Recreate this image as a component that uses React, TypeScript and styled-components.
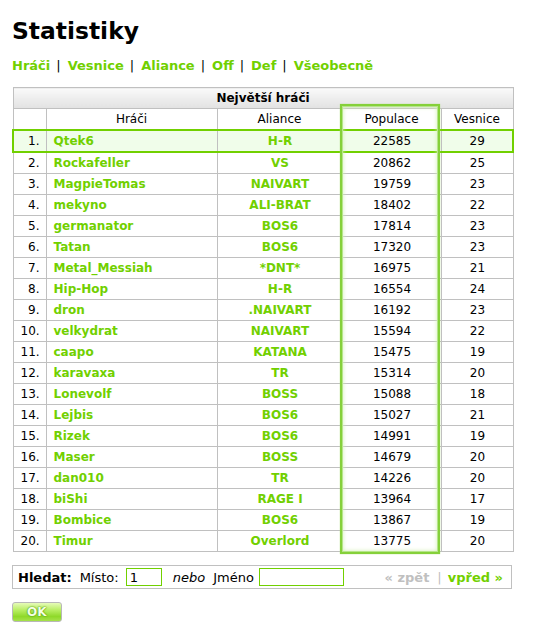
import React from "react";
import styled, { createGlobalStyle } from "styled-components";

const Global = createGlobalStyle`
  html, body { margin: 0; padding: 0; background: #fff; }
  body { font-family: "DejaVu Sans", Verdana, sans-serif; font-size: 12px; color: #000; }
`;

const Page = styled.div`
  padding: 14px 0 0 12px;
  width: 500px;
`;

const Title = styled.h1`
  margin: 0;
  font-size: 23.4px;
  font-weight: bold;
  line-height: 34px;
`;

const Menu = styled.div`
  margin-top: 9px;
  font-size: 13px;
  line-height: 18px;
  font-weight: bold;
  color: #000;
`;

const MenuLink = styled.a`
  color: #71d000;
  text-decoration: none;
  font-weight: bold;
`;

const Sep = styled.span`
  font-weight: normal;
  padding: 0 7px 0 6px;
`;

const TableWrap = styled.div`
  position: relative;
  margin-top: 12px;
`;

const Table = styled.table`
  width: 500px;
  border-collapse: collapse;
  table-layout: fixed;
`;

const CaptionCell = styled.th`
  height: 20px;
  padding: 0;
  border: 1px solid #c0c0c0;
  background: linear-gradient(#fafafa, #ececec 55%, #e2e2e2);
  font-weight: bold;
  text-align: center;
  line-height: 20px;
`;

const HeadCell = styled.td`
  height: 20px;
  padding: 0;
  border: 1px solid #c0c0c0;
  text-align: center;
  line-height: 20px;
`;

const Row = styled.tr<{ $own?: boolean }>`
  background: ${(p) => (p.$own ? "#f0fdea" : "#fff")};
  & > td {
    ${(p) => (p.$own ? "border-top: 2px solid #71d000; border-bottom: 2px solid #71d000;" : "")}
  }
  & > td:first-child {
    ${(p) => (p.$own ? "border-left: 2px solid #71d000;" : "")}
  }
  & > td:last-child {
    ${(p) => (p.$own ? "border-right: 2px solid #71d000;" : "")}
  }
`;

const Cell = styled.td<{ $align?: "left" | "right" | "center"; $green?: boolean }>`
  height: 20px;
  padding: 0 6px 0 7px;
  border: 1px solid #c0c0c0;
  text-align: ${(p) => p.$align || "center"};
  line-height: 20px;
  white-space: nowrap;
  overflow: hidden;
  color: ${(p) => (p.$green ? "#71d000" : "#000")};
  font-weight: ${(p) => (p.$green ? "bold" : "normal")};
`;

const ColHighlight = styled.div`
  position: absolute;
  left: 328px;
  top: 17px;
  width: 100px;
  height: 450px;
  box-sizing: border-box;
  border: 2px solid #85d03a;
  box-shadow: inset 0 0 0 1px #b6e58a, inset 0 0 4px 1px #d4f0b4, 0 0 1px #a7dd70;
  pointer-events: none;
`;

const SearchBar = styled.div`
  margin-top: 13px;
  width: 500px;
  height: 24px;
  box-sizing: border-box;
  border: 1px solid #c0c0c0;
  display: flex;
  align-items: center;
  padding: 0 8px 0 5px;
  font-size: 13px;
`;

const Label = styled.span<{ $bold?: boolean; $italic?: boolean; $gap?: number }>`
  font-weight: ${(p) => (p.$bold ? "bold" : "normal")};
  font-style: ${(p) => (p.$italic ? "italic" : "normal")};
  margin-left: ${(p) => p.$gap || 0}px;
`;

const Input = styled.input<{ $w: number; $gap: number }>`
  width: ${(p) => p.$w}px;
  height: 18px;
  box-sizing: border-box;
  border: 1px solid #71d000;
  margin: 0 0 0 ${(p) => p.$gap}px;
  padding: 0 3px;
  font-family: "DejaVu Sans", Verdana, sans-serif;
  font-size: 13px;
  outline: none;
`;

const Pager = styled.div`
  margin-left: auto;
  font-weight: bold;
  display: flex;
  align-items: center;
`;

const PagerOff = styled.span`
  color: #c0c0c0;
`;

const PagerOn = styled.a`
  color: #71d000;
  text-decoration: none;
`;

const PagerSep = styled.span`
  color: #c0c0c0;
  font-weight: normal;
  padding: 0 6px 0 8px;
`;

const OkButton = styled.button`
  margin-top: 13px;
  width: 50px;
  height: 20px;
  box-sizing: border-box;
  border: 1px solid #b8b8b8;
  border-radius: 3px;
  background: linear-gradient(#e6fbb8, #b8ee62 40%, #8fd92a 75%, #a6e24a);
  color: #f4ffe4;
  font-family: "DejaVu Sans", Verdana, sans-serif;
  font-weight: bold;
  font-size: 12px;
  text-shadow: 0 0 2px #4a9a00, 0 0 1px #4a9a00;
  display: block;
  text-align: left;
  padding: 0 0 0 14px;
`;

const rows: [string, string, number, number][] = [
  ["Qtek6", "H-R", 22585, 29],
  ["Rockafeller", "VS", 20862, 25],
  ["MagpieTomas", "NAIVART", 19759, 23],
  ["mekyno", "ALI-BRAT", 18402, 22],
  ["germanator", "BOS6", 17814, 23],
  ["Tatan", "BOS6", 17320, 23],
  ["Metal_Messiah", "*DNT*", 16975, 21],
  ["Hip-Hop", "H-R", 16554, 24],
  ["dron", ".NAIVART", 16192, 23],
  ["velkydrat", "NAIVART", 15594, 22],
  ["caapo", "KATANA", 15475, 19],
  ["karavaxa", "TR", 15314, 20],
  ["Lonevolf", "BOSS", 15088, 18],
  ["Lejbis", "BOS6", 15027, 21],
  ["Rizek", "BOS6", 14991, 19],
  ["Maser", "BOSS", 14679, 20],
  ["dan010", "TR", 14226, 20],
  ["biShi", "RAGE I", 13964, 17],
  ["Bombice", "BOS6", 13867, 19],
  ["Timur", "Overlord", 13775, 20],
];

export default function App() {
  return (
    <Page>
      <Global />
      <Title>Statistiky</Title>
      <Menu>
        <MenuLink href="#">Hráči</MenuLink>
        <Sep>|</Sep>
        <MenuLink href="#">Vesnice</MenuLink>
        <Sep>|</Sep>
        <MenuLink href="#">Aliance</MenuLink>
        <Sep>|</Sep>
        <MenuLink href="#">Off</MenuLink>
        <Sep>|</Sep>
        <MenuLink href="#">Def</MenuLink>
        <Sep>|</Sep>
        <MenuLink href="#">Všeobecně</MenuLink>
      </Menu>
      <TableWrap>
        <Table>
          <colgroup>
            <col style={{ width: 33 }} />
            <col style={{ width: 171 }} />
            <col style={{ width: 125 }} />
            <col style={{ width: 99 }} />
            <col style={{ width: 72 }} />
          </colgroup>
          <thead>
            <tr>
              <CaptionCell colSpan={5}>Největší hráči</CaptionCell>
            </tr>
            <tr>
              <HeadCell />
              <HeadCell>Hráči</HeadCell>
              <HeadCell>Aliance</HeadCell>
              <HeadCell>Populace</HeadCell>
              <HeadCell>Vesnice</HeadCell>
            </tr>
          </thead>
          <tbody>
            {rows.map(([name, ally, pop, vil], i) => (
              <Row key={name} $own={i === 0}>
                <Cell $align="right">{i + 1}.</Cell>
                <Cell $align="left" $green>{name}</Cell>
                <Cell $green>{ally}</Cell>
                <Cell>{pop}</Cell>
                <Cell>{vil}</Cell>
              </Row>
            ))}
          </tbody>
        </Table>
        <ColHighlight />
      </TableWrap>
      <SearchBar>
        <Label $bold>Hledat:</Label>
        <Label $gap={8}>Místo:</Label>
        <Input $w={36} $gap={7} defaultValue="1" />
        <Label $italic $gap={11}>nebo</Label>
        <Label $gap={8}>Jméno</Label>
        <Input $w={85} $gap={5} />
        <Pager>
          <PagerOff>« zpět</PagerOff>
          <PagerSep>|</PagerSep>
          <PagerOn href="#">vpřed »</PagerOn>
        </Pager>
      </SearchBar>
      <OkButton>OK</OkButton>
    </Page>
  );
}
